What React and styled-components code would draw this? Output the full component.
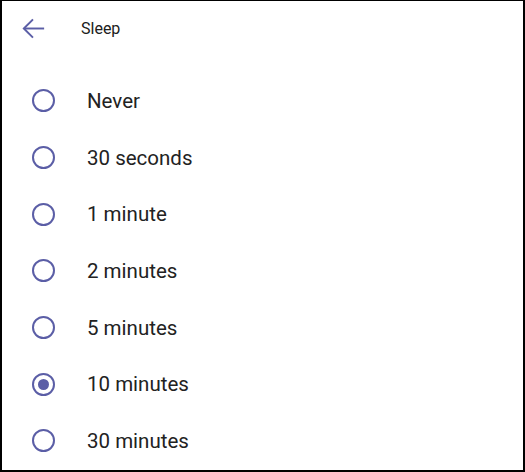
import React, { useState } from "react";
import styled, { createGlobalStyle } from "styled-components";

const Global = createGlobalStyle`
  html, body { margin: 0; padding: 0; background: #fff; }
  body { font-family: Roboto, "Noto Sans", sans-serif; }
`;

const Frame = styled.div`
  box-sizing: border-box;
  width: 525px;
  height: 472px;
  border: 2px solid #000;
  border-top-width: 1px;
  background: #fff;
  overflow: hidden;
  display: flex;
  flex-direction: column;
`;

const Header = styled.div`
  height: 55px;
  display: flex;
  align-items: center;
  padding-left: 17px;
`;

const BackButton = styled.button`
  border: none;
  background: none;
  padding: 0;
  margin: 0;
  width: 29px;
  height: 29px;
  display: flex;
  align-items: center;
  justify-content: center;
  color: #5b5ea6;
  cursor: pointer;
`;

const Title = styled.div`
  margin-left: 33px;
  font-size: 16px;
  color: #202020;
`;

const List = styled.div`
  display: flex;
  flex-direction: column;
  padding-top: 16.6px;
`;

const Row = styled.label`
  height: 56.67px;
  display: flex;
  align-items: center;
  padding-left: 30px;
  cursor: pointer;
`;

const Radio = styled.span`
  box-sizing: border-box;
  width: 23px;
  height: 23px;
  border-radius: 50%;
  border: 2px solid #5b5ea6;
  display: flex;
  align-items: center;
  justify-content: center;
  flex-shrink: 0;
  &::after {
    content: "";
    width: 11px;
    height: 11px;
    border-radius: 50%;
    background: #5b5ea6;
    display: ${(p) => (p.$checked ? "block" : "none")};
  }
`;

const Label = styled.span`
  margin-left: 32px;
  font-size: 20.5px;
  font-weight: 400;
  color: #222;
`;

const options = [
  "Never",
  "30 seconds",
  "1 minute",
  "2 minutes",
  "5 minutes",
  "10 minutes",
  "30 minutes",
];

export default function App() {
  const [sel, setSel] = useState("10 minutes");
  return (
    <>
      <Global />
      <Frame>
        <Header>
          <BackButton aria-label="Back">
            <svg width="29" height="29" viewBox="0 0 24 24" fill="none" stroke="currentColor" strokeWidth="1.6" strokeLinecap="square">
              <path d="M20 12H4.8" />
              <path d="M11 5l-7 7 7 7" />
            </svg>
          </BackButton>
          <Title>Sleep</Title>
        </Header>
        <List>
          {options.map((o) => (
            <Row key={o} onClick={() => setSel(o)}>
              <Radio $checked={sel === o} />
              <Label>{o}</Label>
            </Row>
          ))}
        </List>
      </Frame>
    </>
  );
}
